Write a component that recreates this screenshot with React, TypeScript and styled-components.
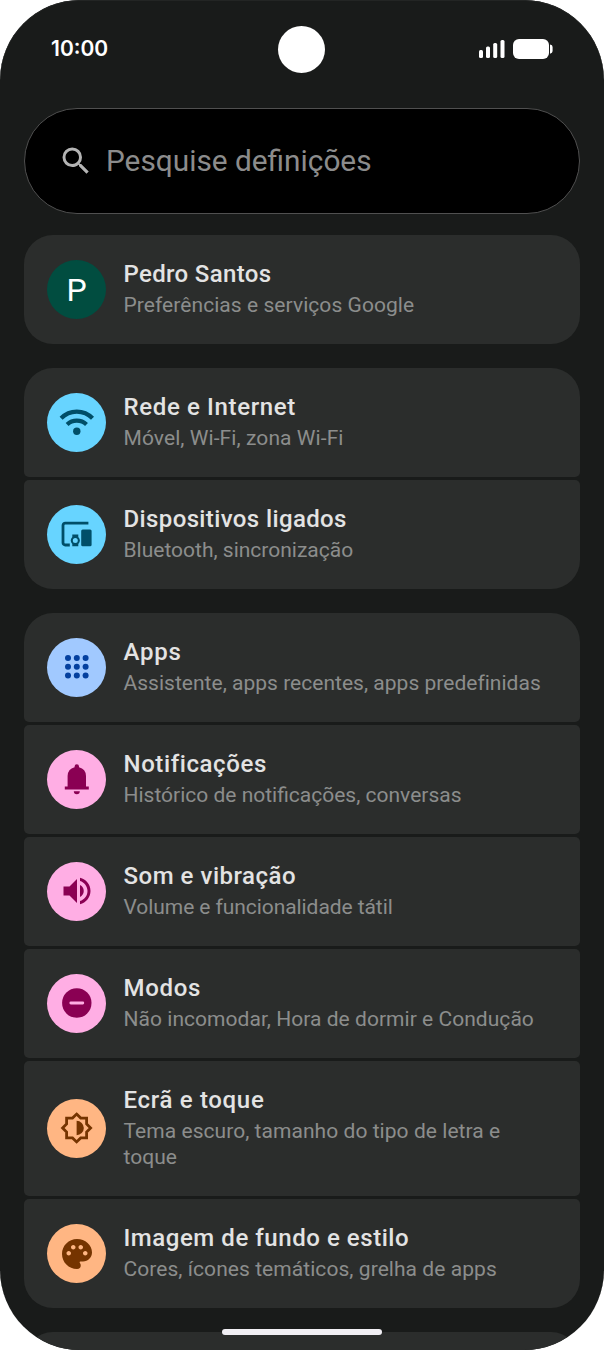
import React, { ReactNode } from "react";
import styled, { createGlobalStyle } from "styled-components";
import { MdSearch, MdPalette, MdVolumeUp } from "react-icons/md";

type Item = {
  title: string;
  sub: string;
  bg: string;
  fg: string;
  icon: ReactNode;
  titleGap?: number;
  subGap?: number;
  tall?: boolean;
};

const WifiIcon = () => (
  <svg width="36" height="36" viewBox="0 0 36 36" fill="none">
    <path d="M2.1 14.3a21.8 21.8 0 0 1 31.4 0" stroke="currentColor" strokeWidth="4.2" />
    <path d="M8.1 20.5a14.2 14.2 0 0 1 19.4 0" stroke="currentColor" strokeWidth="4.2" />
    <circle cx="17.8" cy="27.3" r="3.7" fill="currentColor" />
  </svg>
);

const DevicesIcon = () => (
  <svg width="36" height="36" viewBox="0 0 36 36" fill="none">
    <path
      d="M29.4 7.2H6.2A2.2 2.2 0 0 0 4 9.4V26.8a2.2 2.2 0 0 0 2.2 2.2h4.6"
      stroke="currentColor"
      strokeWidth="2.8"
    />
    <rect x="22.2" y="13.6" width="10.4" height="16.6" rx="1.5" fill="currentColor" />
    <path
      fillRule="evenodd"
      clipRule="evenodd"
      fill="currentColor"
      d="M13.3 18.4h6v2.6a5.2 5.2 0 0 1 0 7v2.3h-6V28a5.2 5.2 0 0 1 0-7zM16.3 22a2.5 2.5 0 1 0 0 5 2.5 2.5 0 0 0 0-5z"
    />
  </svg>
);

const dots = [9, 17.8, 26.6];

const AppsIcon = () => (
  <svg width="36" height="36" viewBox="0 0 36 36" fill="currentColor">
    {dots.map((y) => dots.map((x) => <circle key={`${x}-${y}`} cx={x} cy={y} r="3" />))}
  </svg>
);

const BellIcon = () => (
  <svg width="36" height="36" viewBox="0 0 36 36" fill="currentColor">
    <path d="M5.8 28.4v-3h2.8V15a9.2 9.2 0 0 1 7-8.7V5.5a2.2 2.2 0 0 1 4.4 0v.8a9.2 9.2 0 0 1 7 8.7v10.4h2.8v3zM14.8 30.2h6a3 3 0 0 1-6 0z" />
  </svg>
);

const ModesIcon = () => (
  <svg width="36" height="36" viewBox="0 0 36 36">
    <circle cx="17.8" cy="18" r="14.7" fill="currentColor" />
    <path d="M11.8 18h12" stroke="#ffaee4" strokeWidth="2.8" strokeLinecap="round" />
  </svg>
);

const BrightnessIcon = () => (
  <svg width="36" height="36" viewBox="0 0 36 36" fill="none">
    <path
      d="M17.6 4.1l4.1 4h5.9v5.9l4 4-4 4v5.9h-5.9l-4.1 4-4.1-4H7.6V22l-4-4 4-4V8.1h5.9z"
      stroke="currentColor"
      strokeWidth="2.8"
    />
    <path d="M17.6 10.8a7.2 7.2 0 0 1 0 14.4z" fill="currentColor" />
  </svg>
);

const groups: Item[][] = [
  [
    {
      title: "Pedro Santos",
      sub: "Preferências e serviços Google",
      bg: "#014d40",
      fg: "#ffffff",
      icon: "P",
      titleGap: 0.34,
      subGap: 0.06,
    },
  ],
  [
    {
      title: "Rede e Internet",
      sub: "Móvel, Wi-Fi, zona Wi-Fi",
      bg: "#67d4ff",
      fg: "#004e68",
      icon: <WifiIcon />,
      titleGap: 0.64,
      subGap: 0.08,
    },
    {
      title: "Dispositivos ligados",
      sub: "Bluetooth, sincronização",
      bg: "#67d4ff",
      fg: "#004e68",
      icon: <DevicesIcon />,
      titleGap: 0.38,
    },
  ],
  [
    {
      title: "Apps",
      sub: "Assistente, apps recentes, apps predefinidas",
      bg: "#a1c9ff",
      fg: "#04409f",
      icon: <AppsIcon />,
      titleGap: 0.8,
      subGap: 0.02,
    },
    {
      title: "Notificações",
      sub: "Histórico de notificações, conversas",
      bg: "#ffaee4",
      fg: "#8a0053",
      icon: <BellIcon />,
      titleGap: 0.6,
    },
    {
      title: "Som e vibração",
      sub: "Volume e funcionalidade tátil",
      bg: "#ffaee4",
      fg: "#8a0053",
      icon: <MdVolumeUp size={36} />,
      titleGap: 0.52,
      subGap: -0.07,
    },
    {
      title: "Modos",
      sub: "Não incomodar, Hora de dormir e Condução",
      bg: "#ffaee4",
      fg: "#8a0053",
      icon: <ModesIcon />,
      titleGap: 0.7,
      subGap: 0.04,
    },
    {
      title: "Ecrã e toque",
      sub: "Tema escuro, tamanho do tipo de letra e toque",
      bg: "#ffb683",
      fg: "#753400",
      icon: <BrightnessIcon />,
      titleGap: 0.68,
      subGap: 0.05,
      tall: true,
    },
    {
      title: "Imagem de fundo e estilo",
      sub: "Cores, ícones temáticos, grelha de apps",
      bg: "#ffb683",
      fg: "#753400",
      icon: <MdPalette size={36} />,
      titleGap: 0.55,
      subGap: 0.06,
    },
  ],
];

const App = () => {
  return (
    <>
      <GlobalStyle />
      <Phone>
        <StatusBar>
          <Clock>10:00</Clock>
          <Camera />
          <StatusIcons>
            <svg width="26" height="18" viewBox="0 0 26 18" fill="#fff">
              <rect x="0" y="10" width="4" height="8" rx="1.5" />
              <rect x="7" y="6.5" width="4" height="11.5" rx="1.5" />
              <rect x="14.2" y="3" width="4" height="15" rx="1.5" />
              <rect x="21.5" y="0" width="4" height="18" rx="1.5" />
            </svg>
            <svg width="40" height="20" viewBox="0 0 40 20" fill="#fff">
              <rect x="0" y="0" width="36" height="20" rx="6" />
              <path d="M37 5.5q2.600.4 2.600 2.600v4q0 2.200-2.600 2.600z" />
            </svg>
          </StatusIcons>
        </StatusBar>
        <SearchBar>
          <MdSearch size={36} color="#b4b4b4" />
          <SearchText>Pesquise definições</SearchText>
        </SearchBar>
        <List>
          {groups.map((group) => (
            <Group key={group[0].title}>
              {group.map((item) => (
                <Row key={item.title} $tall={item.tall}>
                  <IconCircle $bg={item.bg} $fg={item.fg}>
                    {item.icon}
                  </IconCircle>
                  <TextBox>
                    <Title $gap={item.titleGap}>{item.title}</Title>
                    <Sub $gap={item.subGap}>{item.sub}</Sub>
                  </TextBox>
                </Row>
              ))}
            </Group>
          ))}
          <Group>
            <Row />
          </Group>
        </List>
        <HomeBar />
      </Phone>
    </>
  );
};

export default App;

const GlobalStyle = createGlobalStyle`
  body {
    margin: 0;
    background: #fff;
  }
`;

const Phone = styled.div`
  position: relative;
  box-sizing: border-box;
  width: 604px;
  height: 1350px;
  overflow: hidden;
  border-radius: 80px;
  background: #191b1a;
  box-shadow: inset 0 1px #232524;
  font-family: Roboto, "Liberation Sans", sans-serif;
`;

const StatusBar = styled.div`
  height: 108px;
  box-sizing: border-box;
  padding: 25.5px 51px 0 50px;
  display: grid;
  grid-template-columns: 1fr 47px 1fr;
  align-items: start;
`;

const Clock = styled.div`
  padding-left: 1px;
  font-family: Inter, sans-serif;
  font-size: 21px;
  font-weight: 600;
  line-height: 46px;
  color: #fff;
`;

const Camera = styled.div`
  width: 47px;
  height: 47px;
  border-radius: 50%;
  background: #fff;
`;

const StatusIcons = styled.div`
  height: 47px;
  display: flex;
  align-items: center;
  justify-content: flex-end;
  gap: 8px;
`;

const SearchBar = styled.div`
  box-sizing: border-box;
  margin: 0 24px;
  height: 106px;
  padding-left: 33px;
  display: flex;
  align-items: center;
  gap: 12px;
  border: 1.5px solid #505050;
  border-radius: 53px;
  background: #000;
`;

const SearchText = styled.span`
  padding-bottom: 2px;
  font-size: 29.8px;
  color: #8c8c8c;
`;

const List = styled.div`
  margin: 21px 24px 0;
  display: flex;
  flex-direction: column;
  gap: 23.8px;
`;

const Group = styled.div`
  display: flex;
  flex-direction: column;
  gap: 3px;
  overflow: hidden;
  border-radius: 29px;
`;

const Row = styled.div<{ $tall?: boolean }>`
  box-sizing: border-box;
  height: ${({ $tall }) => ($tall ? 135.5 : 109)}px;
  padding: 0 23px;
  display: flex;
  align-items: center;
  gap: 17.5px;
  border-radius: 5px;
  background: #2b2d2c;
`;

const IconCircle = styled.div<{ $bg: string; $fg: string }>`
  flex: none;
  width: 59px;
  height: 59px;
  display: flex;
  align-items: center;
  justify-content: center;
  border-radius: 50%;
  font-size: 32px;
  background: ${({ $bg }) => $bg};
  color: ${({ $fg }) => $fg};
`;

const TextBox = styled.div`
  width: 430px;
  display: flex;
  flex-direction: column;
  gap: 2px;
`;

const Title = styled.span<{ $gap?: number }>`
  margin-top: -1px;
  padding-bottom: 1px;
  font-size: 24px;
  font-weight: 500;
  line-height: 30px;
  letter-spacing: ${({ $gap }) => $gap ?? 0}px;
  white-space: nowrap;
  color: #e3e3e3;
`;

const Sub = styled.span<{ $gap?: number }>`
  font-size: 21px;
  line-height: 26.5px;
  letter-spacing: ${({ $gap }) => $gap ?? 0}px;
  color: #8c8d8c;
`;

const HomeBar = styled.div`
  position: absolute;
  left: 222px;
  bottom: 15px;
  width: 160px;
  height: 6px;
  border-radius: 3px;
  background: #f1eff4;
`;
